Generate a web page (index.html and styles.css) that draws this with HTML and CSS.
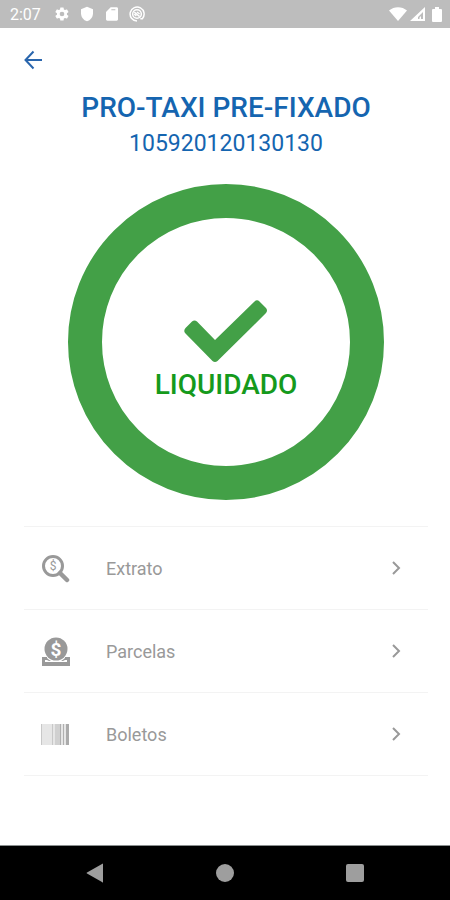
FILE: index.html
```
<!DOCTYPE html>
<html lang="pt-BR">
<head>
  <meta charset="UTF-8">
  <meta name="viewport" content="width=device-width, initial-scale=1.0">
  <title>PRO-TAXI PRE-FIXADO</title>
  <link rel="stylesheet" href="styles.css">
</head>
<body>
  <header class="status-bar">
    <div class="status-left">
      <span class="clock">2:07</span>
      <svg class="status-icon" viewBox="0 0 24 24"><path d="M19.4 13a7.500 7.500 0 0 0 0-2l2.100-1.600a.5.5 0 0 0 .1-.6l-2-3.500a.5.5 0 0 0-.6-.2l-2.500 1a7 7 0 0 0-1.700-1l-.4-2.600a.5.5 0 0 0-.5-.4h-4a.5.5 0 0 0-.5.4L9 5.100a7 7 0 0 0-1.700 1l-2.500-1a.5.5 0 0 0-.6.2l-2 3.500a.5.5 0 0 0 .1.600L4.500 11a8 8 0 0 0 0 2l-2.200 1.600a.5.5 0 0 0-.1.600l2 3.500c.1.200.4.300.6.200l2.500-1a7 7 0 0 0 1.700 1l.4 2.600c0 .3.200.4.500.4h4c.3 0 .5-.1.500-.4l.4-2.600a7 7 0 0 0 1.700-1l2.500 1c.2.100.5 0 .6-.2l2-3.500a.5.5 0 0 0-.1-.6zM12 15.500a3.500 3.500 0 1 1 0-7 3.500 3.500 0 0 1 0 7z"/></svg>
      <svg class="status-icon" viewBox="0 0 24 24"><path d="M12 1 3 5v6c0 5.500 3.800 10.700 9 12 5.200-1.300 9-6.500 9-12V5z"/></svg>
      <svg class="status-icon" viewBox="0 0 24 24"><path d="M19 2h-9L3 9v11c0 1.100.9 2 2 2h14c1.100 0 2-.9 2-2V4c0-1.100-.9-2-2-2zM17 6.500h-6V5h6z"/></svg>
      <svg class="status-icon" viewBox="0 0 24 24" fill="none" stroke="#fff" stroke-width="2.200"><path d="M12 22.500a10.500 10.500 0 1 1 8-3.500h-3"/><circle cx="12" cy="12" r="6.500"/><path d="m8 9 8 7M12 9l4 3M8 12l3 3"/></svg>
    </div>
    <div class="status-right">
      <svg width="18" height="14" viewBox="0 0 18 14"><path d="M9 14 0 3.500C5-1 13-1 18 3.500z"/></svg>
      <svg width="15" height="14" viewBox="0 0 15 14"><path fill-rule="evenodd" d="M15 0v14H0zM13 5 8 10v2h1.500v-1.500L11 9v3h2z"/></svg>
      <svg width="10" height="15" viewBox="0 0 10 15"><path d="M3 0h4v2h2a1 1 0 0 1 1 1v11a1 1 0 0 1-1 1H1a1 1 0 0 1-1-1V3a1 1 0 0 1 1-1h2z"/></svg>
    </div>
  </header>

  <main class="content">
    <button class="back" type="button" aria-label="Voltar">
      <svg width="18" height="20" viewBox="0 0 18 20"><path d="M18 10H2"/><path d="M9.500 1.500 1.500 10l8 8.500"/></svg>
    </button>

    <h1 class="title">PRO-TAXI PRE-FIXADO</h1>
    <p class="contract">105920120130130</p>

    <div class="ring">
      <svg width="84" height="62" viewBox="0 0 84 62"><path d="M1.500 28 8 21.500q2.500-2 5 0L31 40 70.500 1.500q2.500-2.500 5 0l6.500 6.500q2 2.500 0 5L33.500 61q-2.500 2-5 0L1.500 33.500q-2.500-2.500 0-5.500z"/></svg>
      <strong class="ring-label">LIQUIDADO</strong>
    </div>

    <nav class="menu">
      <a class="menu-item" href="#extrato">
        <svg class="menu-icon" viewBox="0 0 30 30">
          <circle cx="12" cy="13" r="9.500" fill="none" stroke="#999" stroke-width="3"/>
          <path d="m19 20 7 7" stroke="#999" stroke-width="4.500" stroke-linecap="round"/>
          <text x="12" y="17" font-size="12">$</text>
        </svg>
        <span class="menu-label">Extrato</span>
        <svg class="chevron" viewBox="0 0 9 14"><path d="m1 1 6 6-6 6"/></svg>
      </a>
      <a class="menu-item" href="#parcelas">
        <svg class="menu-icon" viewBox="0 0 30 30">
          <path d="M1 21h5v3H4v2h22v-2h-2v-3h5v9H1z" fill="#999"/>
          <path d="M6 22q2 2 4 3h10q2-1 4-3v2l-2 1H8l-2-1z" fill="#999"/>
          <circle cx="15" cy="13" r="11.500" fill="#999"/>
          <text x="15" y="20" font-size="19" font-weight="700" class="coin-sign">$</text>
        </svg>
        <span class="menu-label">Parcelas</span>
        <svg class="chevron" viewBox="0 0 9 14"><path d="m1 1 6 6-6 6"/></svg>
      </a>
      <a class="menu-item" href="#boletos">
        <svg class="menu-icon" viewBox="0 0 30 30" shape-rendering="crispEdges">
          <path d="M0 5h28v21H0z" fill="#e6e6e6"/>
          <path d="M0 5h1v21H0zM11 5h1v21h-1z" fill="#c8c8c8"/>
          <path d="M14 5h6v21h-6z" fill="#d0d0d0"/>
          <path d="M19 5h1v21h-1zM22 5h1v21h-1z" fill="#b0b0b0"/>
          <path d="M25 5h3v21h-3z" fill="#ababab"/>
        </svg>
        <span class="menu-label">Boletos</span>
        <svg class="chevron" viewBox="0 0 9 14"><path d="m1 1 6 6-6 6"/></svg>
      </a>
    </nav>
  </main>

  <footer class="nav-bar">
    <button type="button" aria-label="Voltar"><svg width="20" height="20" viewBox="0 0 20 20"><path d="M18 1v18q0 1-1 0L2 10.500q-1-.5 0-1L17 1q1-1 1 0z"/></svg></button>
    <button type="button" aria-label="Início"><svg width="20" height="20" viewBox="0 0 20 20"><circle cx="10" cy="10" r="9"/></svg></button>
    <button type="button" aria-label="Recentes"><svg width="20" height="20" viewBox="0 0 20 20"><rect x="1" y="1" width="18" height="18" rx="2"/></svg></button>
  </footer>
</body>
</html>
```
FILE: styles.css
```
* {
  box-sizing: border-box;
}

body {
  margin: 0;
  min-height: 100vh;
  display: flex;
  flex-direction: column;
  background: #fff;
  font-family: Roboto, sans-serif;
}

button {
  padding: 0;
  border: 0;
  background: none;
  cursor: pointer;
}

svg {
  display: block;
  flex: none;
}

.status-bar {
  display: flex;
  align-items: center;
  justify-content: space-between;
  height: 28px;
  padding: 0 8px 0 10px;
  background: #bdbdbd;
  color: #fff;
  fill: #fff;
}

.status-left {
  display: flex;
  align-items: center;
  gap: 9px;
}

.clock {
  margin-right: 4px;
  font-size: 16px;
}

.status-icon {
  width: 16px;
  height: 16px;
}

.status-right {
  display: flex;
  align-items: center;
  gap: 3px;
}

.status-right svg:last-child {
  margin-left: 4px;
}

.content {
  flex: 1;
  display: flex;
  flex-direction: column;
  align-items: center;
  padding: 22px 22px 24px 24px;
}

.back {
  align-self: flex-start;
}

.back svg {
  fill: none;
  stroke: #2a66ad;
  stroke-width: 2;
}

.title {
  margin: 20px 0 0;
  font-size: 28px;
  line-height: 36px;
  font-weight: 500;
  color: #1565b0;
}

.contract {
  margin: 4px 0 0;
  font-size: 23px;
  line-height: 28px;
  color: #1565b0;
}

.ring {
  display: flex;
  flex-direction: column;
  align-items: center;
  justify-content: center;
  gap: 7px;
  width: 316px;
  height: 316px;
  margin: 26px 0;
  padding-top: 16px;
  border: 34px solid #43a047;
  border-radius: 50%;
  fill: #43a047;
}

.ring-label {
  font-size: 28px;
  line-height: 32px;
  font-weight: 500;
  color: #159a1c;
}

.menu {
  align-self: stretch;
  border-top: 1px solid #f3f3f3;
}

.menu-item {
  display: flex;
  align-items: center;
  height: 83px;
  padding: 0 27px 0 17px;
  border-bottom: 1px solid #f3f3f3;
  color: #999;
  text-decoration: none;
}

.menu-icon {
  width: 30px;
  height: 30px;
}

.menu-icon text {
  fill: #999;
  text-anchor: middle;
}

.menu-icon .coin-sign {
  fill: #fff;
}

.menu-label {
  flex: 1;
  margin-left: 35px;
  font-size: 18px;
}

.chevron {
  width: 9px;
  height: 14px;
  fill: none;
  stroke: #999;
  stroke-width: 2;
}

.nav-bar {
  display: grid;
  grid-template-columns: repeat(3, 1fr);
  height: 55px;
  padding: 0 30px;
  border-top: 1px solid #8a8f8f;
  background: #000;
}

.nav-bar button {
  display: flex;
  align-items: center;
  justify-content: center;
  fill: #9e9e9e;
}
```
